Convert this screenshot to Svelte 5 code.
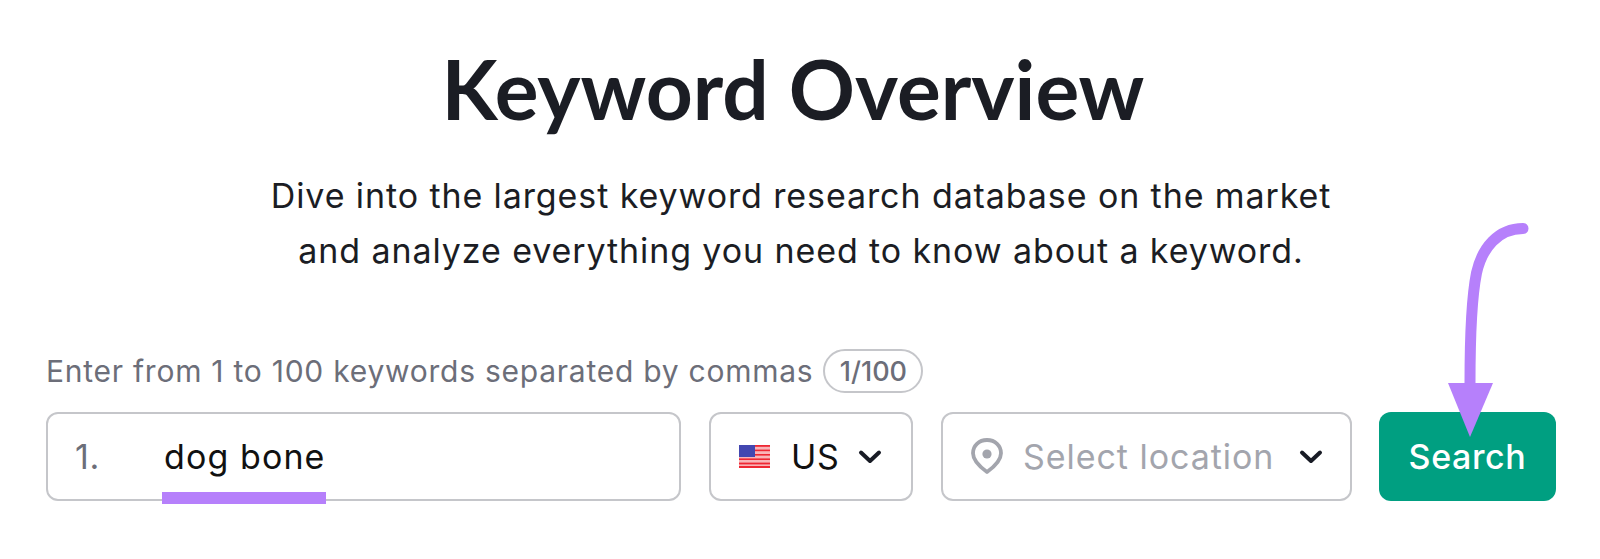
<script lang="ts">
  // Keyword Overview search form
  let keyword = $state("dog bone");
  const limit = 100;
  let count = $derived(keyword.trim() ? keyword.split(",").length : 0);
</script>

<main class="page">
  <h1>Keyword Overview</h1>
  <p class="lead">
    Dive into the largest keyword research database on the market<br />
    and analyze everything you need to know about a keyword.
  </p>

  <div class="hint">
    <span>Enter from 1 to 100 keywords separated by commas</span>
    <span class="counter">{count}/{limit}</span>
  </div>

  <div class="form">
    <div class="field keywords">
      <span class="num">1.</span>
      <span class="kw">{keyword}</span>
      <span class="underline"></span>
    </div>

    <button class="field db">
      <svg class="flag" width="31" height="23" viewBox="0 0 31 23">
        <rect width="31" height="23" fill="#f9b4b8" />
        <g fill="#ee2733">
          <rect y="0" width="31" height="1.8" />
          <rect y="4.600" width="31" height="1.600" />
          <rect y="9" width="31" height="1.600" />
          <rect y="13.400" width="31" height="1.600" />
          <rect y="17.600" width="31" height="1.800" />
          <rect y="21" width="31" height="2" />
        </g>
        <rect width="16" height="12" fill="#4347b0" />
      </svg>
      <span class="db-label">US</span>
      <svg class="chev" width="24" height="15" viewBox="0 0 24 15">
        <path d="M3 3.500 12 12l9-8.500" fill="none" stroke="#181b25" stroke-width="4" stroke-linecap="round" stroke-linejoin="round" />
      </svg>
    </button>

    <button class="field loc">
      <svg class="pin" width="32" height="36" viewBox="0 0 32 36">
        <path d="M16 2C7.800 2 2 7.800 2 15.200c0 7.800 7.400 14 14 18.800 6.600-4.800 14-11 14-18.800C30 7.800 24.200 2 16 2Z" fill="none" stroke="#a3a5ad" stroke-width="3.800" stroke-linejoin="round" />
        <circle cx="16" cy="16" r="4.600" fill="#a3a5ad" />
      </svg>
      <span class="placeholder">Select location</span>
      <svg class="chev" width="24" height="15" viewBox="0 0 24 15">
        <path d="M3 3.500 12 12l9-8.500" fill="none" stroke="#181b25" stroke-width="4" stroke-linecap="round" stroke-linejoin="round" />
      </svg>
    </button>

    <button class="search">Search</button>

    <svg class="arrow" width="90" height="225" viewBox="0 0 90 225">
      <path d="M77 5.500C52 5.500 36 25 30.500 50c-5 25-6.500 60-6.500 110" fill="none" stroke="#b680fb" stroke-width="11" stroke-linecap="round" />
      <path d="M2 160h45L24 214Z" fill="#b680fb" />
    </svg>
  </div>
</main>

<style>
  :global(body) {
    margin: 0;
    background: #fff;
  }
  .page {
    height: 559px;
    box-sizing: border-box;
    padding: 40px 44px 0 46px;
    font-family: Inter, "Liberation Sans", sans-serif;
    color: #181b25;
    overflow: hidden;
  }
  h1 {
    margin: 0;
    padding-right: 16px;
    text-align: center;
    font-family: Lato, Inter, sans-serif;
    font-size: 82px;
    line-height: 96px;
    font-weight: 700;
    color: #1b1d24;
  }
  .lead {
    margin: 32px 0 0;
    text-align: center;
    font-size: 34px;
    line-height: 55px;
    letter-spacing: 0.9px;
    color: #1b1d24;
  }
  .hint {
    margin-top: 71px;
    display: flex;
    align-items: center;
    gap: 10px;
    height: 44px;
    font-size: 30px;
    letter-spacing: 0.75px;
    color: #6c6e79;
  }
  .counter {
    box-sizing: border-box;
    height: 44px;
    width: 100px;
    display: flex;
    align-items: center;
    justify-content: center;
    border: 2px solid #c5c6ca;
    border-radius: 22px;
    font-size: 27px;
    letter-spacing: 0;
    font-weight: 500;
  }
  .form {
    position: relative;
    margin-top: 19px;
    display: flex;
    height: 89px;
  }
  .field {
    box-sizing: border-box;
    height: 89px;
    display: flex;
    align-items: center;
    background: #fff;
    border: 2px solid #c5c6ca;
    border-radius: 12px;
    padding: 0;
    font-family: inherit;
    font-size: 34px;
    letter-spacing: 0.6px;
    color: #111;
  }
  .keywords {
    position: relative;
    width: 635px;
    margin-right: 28px;
    padding-left: 27px;
  }
  .num {
    width: 89px;
    color: #6c6e79;
  }
  .kw {
    letter-spacing: 1.1px;
  }
  .underline {
    position: absolute;
    left: 114px;
    bottom: -5px;
    width: 164px;
    height: 12px;
    background: #b680fb;
  }
  .db {
    width: 204px;
    margin-right: 28px;
    padding-left: 28px;
  }
  .db-label {
    margin-left: 21px;
  }
  .db .chev {
    margin-left: 19px;
  }
  .loc {
    width: 411px;
    margin-right: 27px;
    padding-left: 28px;
  }
  .pin {
    margin-bottom: 2px;
  }
  .placeholder {
    margin-left: 20px;
    color: #a3a5ad;
    letter-spacing: 0.95px;
  }
  .loc .chev {
    margin-left: 25px;
  }
  .search {
    width: 177px;
    height: 89px;
    border: 0;
    border-radius: 12px;
    background: #009f81;
    color: #fff;
    font-family: inherit;
    font-size: 34px;
    letter-spacing: 0.6px;
    font-weight: 500;
    padding: 0;
  }
  .arrow {
    position: absolute;
    left: 1400px;
    top: -189px;
  }
</style>
